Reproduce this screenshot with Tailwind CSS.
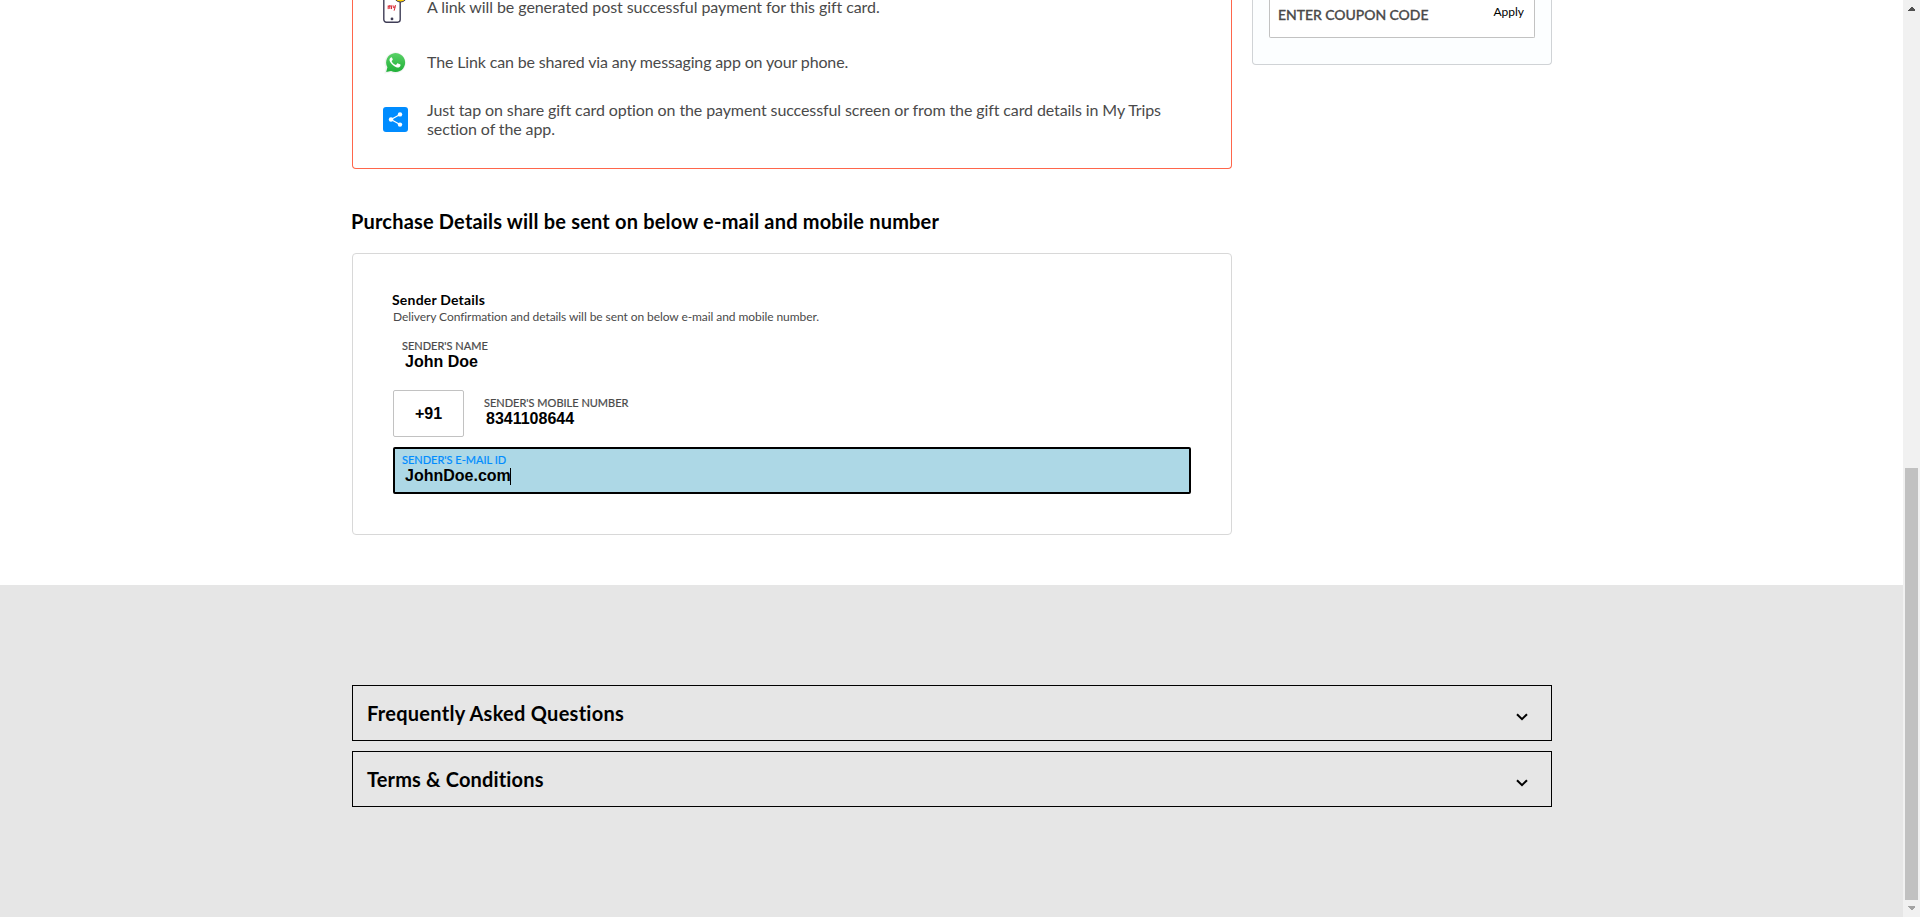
<!DOCTYPE html>
<html lang="en">
<head>
<meta charset="utf-8">
<title>Gift Card</title>
<script src="https://cdn.jsdelivr.net/npm/@tailwindcss/browser@4"></script>
</head>
<body class="h-[917px] overflow-hidden bg-white font-['Lato',sans-serif] text-black flex">
<div class="w-[1903px] h-[917px] flex flex-col">
  <main class="h-[585px] shrink-0 pl-[352px] flex gap-5 items-start overflow-hidden">
    <div class="w-[880px]">
      <section class="-mt-[21px] h-[190px] border border-t-0 border-[#ff664b] rounded-b-[4px] pl-[30px] text-base leading-[19px] text-[#4a4a4a]">
        <div class="h-14 flex items-center">
          <svg class="w-[25px] h-8 overflow-visible shrink-0" viewBox="0 0 25 32" fill="none">
            <rect x=".8" y="-6" width="16.4" height="37.2" rx="2.6" stroke="#3f3d56" stroke-width="1.4" fill="#fff"/>
            <circle cx="9" cy="27.9" r="1.4" fill="#3f3d56"/>
            <circle cx="17.5" cy="4.2" r="6.8" fill="#ffd200" stroke="#3f3d56" stroke-width="1"/>
            <path d="M5.2 14.5v3.6M5.2 15.5l1.4-1 .3 3.5M6.9 15.4l1.4-.9.3 3.6M10 14.3l.4 2.4 1.3-.4.8-2.2M12.3 15.5l-1.2 4.2" stroke="#d8232f" stroke-width="1"/>
          </svg>
          <p class="ml-[19px] pb-0.5 tracking-[-0.075px]">A link will be generated post successful payment for this gift card.</p>
        </div>
        <div class="h-14 flex items-center">
          <svg class="w-[25px] h-[25px] shrink-0" viewBox="0 0 25 25">
            <defs><linearGradient id="g" x1="0" y1="0" x2="0" y2="1"><stop offset="0" stop-color="#5ad167"/><stop offset="1" stop-color="#20b038"/></linearGradient></defs>
            <path d="M1.4 22.800 2.600 16.500A10.600 10.600 0 1 1 7.300 21.300Z" fill="#f1f3f1"/>
            <path d="M3.2 21.100 4.400 16.300A9.500 9.500 0 1 1 8.100 19.900Z" fill="url(#g)"/>
            <path d="M9.200 7c-.4-.8-.8-.8-1.300-.6-1.800 1.100-1.700 3-.7 4.600 1.600 2.600 3.700 4.600 6.700 5.400 1.700.4 3.400-.5 3.600-2 .1-.7 0-.9-.5-1.100l-2-.9c-.4-.2-.7-.1-1 .3l-.8 1c-.2.2-.5.3-.8.1-1.700-.8-2.900-1.900-3.700-3.400-.1-.3 0-.5.2-.7l.7-.8c.2-.2.2-.4.1-.7z" fill="#fff"/>
          </svg>
          <p class="ml-[19px] pb-[3px] tracking-[-0.145px]">The Link can be shared via any messaging app on your phone.</p>
        </div>
        <div class="h-14 flex items-center">
          <svg class="w-[25px] h-[25px] shrink-0" viewBox="0 0 25 25">
            <rect width="25" height="25" rx="3" fill="#008cff"/>
            <path d="M17 7.500 8 12.500l9 5" fill="none" stroke="#fff" stroke-width="1.200"/>
            <circle cx="17" cy="7.400" r="2.200" fill="#fff"/><circle cx="8" cy="12.500" r="2.200" fill="#fff"/><circle cx="17" cy="17.600" r="2.200" fill="#fff"/>
          </svg>
          <p class="ml-[19px] w-[760px] tracking-[-0.105px]">Just tap on share gift card option on the payment successful screen or from the gift card details in My Trips section of the app.</p>
        </div>
      </section>
      <h2 class="mt-10 -ml-px text-xl leading-6 font-bold tracking-[0.185px]">Purchase Details will be sent on below e-mail and mobile number</h2>
      <section class="mt-5 h-[282px] border border-[#d8d8d8] rounded-[4px] px-10 pt-[37px]">
        <h3 class="-ml-px text-sm leading-[17px] font-bold tracking-[0.2px]">Sender Details</h3>
        <p class="pt-px text-xs leading-[15px] text-[#4a4a4a] tracking-[-0.075px]">Delivery Confirmation and details will be sent on below e-mail and mobile number.</p>
        <div class="mt-[9px] flex flex-col gap-[10px]">
          <div class="h-[47px] pl-[9px] pt-[6px]">
            <div class="text-[11px] leading-[14px] text-[#4a4a4a] [-webkit-text-stroke:0.2px]">SENDER'S NAME</div>
            <div class="pl-[3px] text-base leading-[18px] font-bold font-['Liberation_Sans',sans-serif]">John Doe</div>
          </div>
          <div class="h-[47px] flex">
            <div class="w-[71px] border border-[#c2c2c2] rounded-[2px] flex items-center justify-center text-base font-bold font-['Liberation_Sans',sans-serif]">+91</div>
            <div class="ml-5 pt-[6px]">
              <div class="text-[11px] leading-[14px] text-[#4a4a4a] [-webkit-text-stroke:0.2px]">SENDER'S MOBILE NUMBER</div>
              <div class="pl-0.5 text-base leading-[18px] font-bold font-['Liberation_Sans',sans-serif]">8341108644</div>
            </div>
          </div>
          <div class="h-[47px] border-2 border-black rounded-[2px] bg-[#add8e6] pl-[7px] pt-[4px]">
            <div class="text-[11px] leading-[14px] text-[#008cff] [-webkit-text-stroke:0.2px]">SENDER'S E-MAIL ID</div>
            <div class="pl-[3px] h-[18px] flex items-center text-base leading-[18px] font-bold font-['Liberation_Sans',sans-serif]">JohnDoe.com<span class="-ml-px w-px h-[17px] bg-black"></span></div>
          </div>
        </div>
      </section>
    </div>
    <aside class="w-[300px] h-[65px] border border-t-0 border-[#d0d3d6] rounded-b-[4px] bg-[#fcfeff] px-4">
      <div class="h-[38px] border border-t-0 border-[#c2c2c2] rounded-b-[2px] bg-white flex justify-between pl-[8px] pr-[10px]">
        <span class="pt-[6px] text-sm leading-[17px] font-medium text-[#4a4a4a] tracking-[-0.05px] [-webkit-text-stroke:0.3px]">ENTER COUPON CODE</span>
        <span class="pt-[4px] text-xs leading-[15px]">Apply</span>
      </div>
    </aside>
  </main>
  <section class="flex-1 bg-[#e6e6e6] pl-[352px] pt-[100px] flex flex-col gap-[10px]">
    <div class="w-[1200px] h-14 border border-black flex items-center justify-between pl-[14px] pr-[23px]">
      <h2 class="text-xl leading-6 font-bold tracking-[0.27px]">Frequently Asked Questions</h2>
      <svg class="w-3 h-2 mt-2" viewBox="0 0 12 8" fill="none" stroke="#000" stroke-width="2"><path d="m1 1.200 5 5 5-5"/></svg>
    </div>
    <div class="w-[1200px] h-14 border border-black flex items-center justify-between pl-[14px] pr-[23px]">
      <h2 class="text-xl leading-6 font-bold tracking-[0.16px]">Terms &amp; Conditions</h2>
      <svg class="w-3 h-2 mt-2" viewBox="0 0 12 8" fill="none" stroke="#000" stroke-width="2"><path d="m1 1.200 5 5 5-5"/></svg>
    </div>
  </section>
</div>
<div class="w-[17px] h-[917px] bg-[#f1f1f1] flex flex-col items-center">
  <svg class="w-[17px] h-[17px] shrink-0" viewBox="0 0 17 17" shape-rendering="crispEdges"><path d="M5 11v-1l3.500-3.500L12 10v1z" fill="#505050"/></svg>
  <div class="mt-[451px] w-[13px] h-[432px] bg-[#c1c1c1]"></div>
  <svg class="w-[17px] h-[17px] shrink-0" viewBox="0 0 17 17" shape-rendering="crispEdges"><path d="M5 6v1l3.500 3.500L12 7V6z" fill="#a3a3a3"/></svg>
</div>
</body>
</html>
